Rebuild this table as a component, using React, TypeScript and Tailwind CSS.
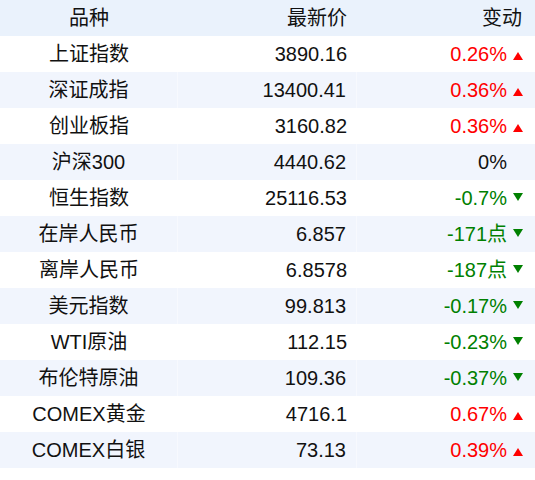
import React from "react";

type Row = {
  name: string;
  price: string;
  change: string;
  dir: "up" | "down" | "flat";
};

const rows: Row[] = [
  { name: "上证指数", price: "3890.16", change: "0.26%", dir: "up" },
  { name: "深证成指", price: "13400.41", change: "0.36%", dir: "up" },
  { name: "创业板指", price: "3160.82", change: "0.36%", dir: "up" },
  { name: "沪深300", price: "4440.62", change: "0%", dir: "flat" },
  { name: "恒生指数", price: "25116.53", change: "-0.7%", dir: "down" },
  { name: "在岸人民币", price: "6.857", change: "-171点", dir: "down" },
  { name: "离岸人民币", price: "6.8578", change: "-187点", dir: "down" },
  { name: "美元指数", price: "99.813", change: "-0.17%", dir: "down" },
  { name: "WTI原油", price: "112.15", change: "-0.23%", dir: "down" },
  { name: "布伦特原油", price: "109.36", change: "-0.37%", dir: "down" },
  { name: "COMEX黄金", price: "4716.1", change: "0.67%", dir: "up" },
  { name: "COMEX白银", price: "73.13", change: "0.39%", dir: "up" },
];

const Arrow = ({ dir }: { dir: "up" | "down" }) =>
  dir === "up" ? (
    <svg width="10" height="8" viewBox="0 0 10 8" className="ml-[6px] mt-[3px] shrink-0">
      <polygon points="5,0 10,8 0,8" fill="#ff0000" />
    </svg>
  ) : (
    <svg width="10" height="8" viewBox="0 0 10 8" className="ml-[6px] mb-[3px] shrink-0">
      <polygon points="0,0 10,0 5,8" fill="#008000" />
    </svg>
  );

export default function App() {
  return (
    <div
      className="w-[535px] bg-white text-[20px] text-[#111]"
      style={{ fontFamily: '"Liberation Sans", "Noto Sans CJK SC", sans-serif' }}
    >
      <div className="grid h-[36px] grid-cols-[178px_179px_1fr] items-center bg-[#eaf2fc]">
        <div className="text-center">品种</div>
        <div className="pr-[10px] text-right">最新价</div>
        <div className="pr-[13px] text-right">变动</div>
      </div>

      {rows.map((row, i) => {
        const shaded = i % 2 === 1;
        const color =
          row.dir === "up"
            ? "text-[#ff0000]"
            : row.dir === "down"
              ? "text-[#008000]"
              : "text-[#111]";
        return (
          <div
            key={row.name}
            className={`grid h-[36px] grid-cols-[178px_179px_1fr] items-center ${
              shaded ? "bg-[#f1f5fd]" : "bg-white"
            }`}
          >
            <div
              className={`flex h-full items-center justify-center ${
                shaded ? "border-r border-[#f7f9fe]" : ""
              }`}
            >
              {row.name}
            </div>
            <div
              className={`flex h-full items-center justify-end pr-[10px] ${
                shaded ? "border-r border-[#f7f9fe]" : ""
              }`}
            >
              {row.price}
            </div>
            <div
              className={`flex h-full items-center justify-end ${color} ${
                row.dir === "flat" ? "pr-[28px]" : "pr-[12px]"
              }`}
            >
              <span>{row.change}</span>
              {row.dir !== "flat" && <Arrow dir={row.dir} />}
            </div>
          </div>
        );
      })}
    </div>
  );
}
